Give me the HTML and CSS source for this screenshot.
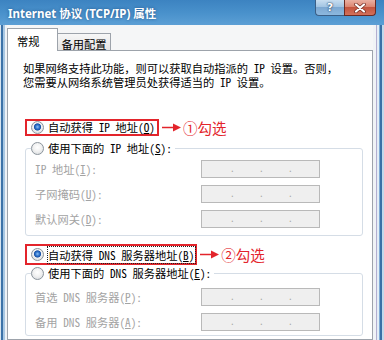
FILE: index.html
```html
<!DOCTYPE html>
<html lang="zh-CN">
<head>
<meta charset="utf-8">
<title>Internet 协议 (TCP/IP) 属性</title>
<link rel="stylesheet" href="styles.css">
</head>
<body>
<div class="window">
  <div class="titlebar">
    <span class="title">Internet 协议 (TCP/IP) 属性</span>
    <div class="caption-btns">
      <span class="btn help">?</span>
      <span class="btn close"><svg width="12" height="10" viewBox="0 0 12 10"><path d="M2 1.5 L10 8.5 M10 1.5 L2 8.5" stroke="#6e2a20" stroke-width="3.6" stroke-linecap="round"/><path d="M2 1.5 L10 8.5 M10 1.5 L2 8.5" stroke="#fff" stroke-width="2.2" stroke-linecap="round"/></svg></span>
    </div>
  </div>
  <div class="frame">
    <div class="edge-l"></div>
    <div class="dialog">
      <div class="tabs">
        <div class="tab active">常规</div>
        <div class="tab inactive">备用配置</div>
        <div class="tabs-fill"></div>
      </div>
      <div class="panel">
        <p class="intro">如果网络支持此功能，则可以获取自动指派的 IP 设置。否则，<br>您需要从网络系统管理员处获得适当的 IP 设置。</p>

        <div class="pick pick-1">
          <div class="pick-box"><span class="radio on"></span><span>自动获得 IP 地址(<u>O</u>)</span></div>
          <svg class="arrow" width="19" height="9" viewBox="0 0 19 9"><path d="M0 4.5 H12" stroke="#e3242b" stroke-width="1.5"/><path d="M11 0.5 L19 4.5 L11 8.5 Z" fill="#e3242b"/></svg>
          <span class="note">①勾选</span>
        </div>

        <fieldset class="group group-1">
          <legend class="group-title"><span class="opt"><span class="radio"></span><span>使用下面的 IP 地址(<u>S</u>):</span></span></legend>
          <div class="rows">
            <span class="label">IP 地址(<u>I</u>):</span>
            <span class="ipbox"><span>.</span><span>.</span><span>.</span></span>
            <span class="label">子网掩码(<u>U</u>):</span>
            <span class="ipbox"><span>.</span><span>.</span><span>.</span></span>
            <span class="label">默认网关(<u>D</u>):</span>
            <span class="ipbox"><span>.</span><span>.</span><span>.</span></span>
          </div>
        </fieldset>

        <div class="pick pick-2">
          <div class="pick-box"><span class="radio on"></span><span class="focus">自动获得 DNS 服务器地址(<u>B</u>)</span></div>
          <svg class="arrow" width="19" height="9" viewBox="0 0 19 9"><path d="M0 4.5 H12" stroke="#e3242b" stroke-width="1.5"/><path d="M11 0.5 L19 4.5 L11 8.5 Z" fill="#e3242b"/></svg>
          <span class="note">②勾选</span>
        </div>

        <fieldset class="group group-2">
          <legend class="group-title"><span class="opt"><span class="radio"></span><span>使用下面的 DNS 服务器地址(<u>E</u>):</span></span></legend>
          <div class="rows">
            <span class="label">首选 DNS 服务器(<u>P</u>):</span>
            <span class="ipbox"><span>.</span><span>.</span><span>.</span></span>
            <span class="label">备用 DNS 服务器(<u>A</u>):</span>
            <span class="ipbox"><span>.</span><span>.</span><span>.</span></span>
          </div>
        </fieldset>
      </div>
    </div>
    <div class="edge-r"></div>
  </div>
</div>
</body>
</html>
```

FILE: styles.css
```css
* { box-sizing: border-box; }
html, body { margin: 0; padding: 0; }
body {
  width: 384px;
  height: 340px;
  overflow: hidden;
  font-family: "Noto Sans Mono CJK SC", "Noto Sans CJK SC", sans-serif;
  font-size: 11.25px;
  color: #000;
  background: #fff;
}
.window {
  width: 384px;
  height: 340px;
  display: flex;
  flex-direction: column;
  background: #eef2f6;
}
.titlebar {
  height: 25px;
  flex: none;
  display: flex;
  align-items: flex-start;
  padding: 0 8px;
  background: linear-gradient(to bottom, #3c83c1 0%, #4a92cc 55%, #5c9fd5 100%);
}
.title {
  font-family: "Noto Sans", "Noto Sans CJK SC", sans-serif;
  font-weight: 700;
  font-size: 11.5px;
  line-height: 14px;
  margin-top: 7px;
  color: #fff;
  text-shadow: 0 0 3px rgba(20, 60, 110, .7);
  white-space: nowrap;
}
.caption-btns {
  margin-left: auto;
  display: flex;
  height: 16px;
}
.btn {
  height: 16px;
  display: flex;
  align-items: center;
  justify-content: center;
}
.help {
  width: 29px;
  border: 1px solid #3b5f86;
  border-top: 0;
  border-right: 0;
  border-radius: 0 0 0 4px;
  background: linear-gradient(to bottom, #c8def0 0%, #a3c5e3 45%, #7ea9d2 50%, #8cb8df 100%);
  color: #fff;
  font-family: "DejaVu Sans", sans-serif;
  font-weight: 700;
  font-size: 11px;
  text-shadow: 0 0 2px #1d3a5c, 0 0 1px #1d3a5c;
}
.close {
  width: 32px;
  border: 1px solid #6b2b23;
  border-top: 0;
  border-radius: 0 0 4px 0;
  background: linear-gradient(to bottom, #eab0a2 0%, #dc8672 45%, #c4553f 50%, #d2705a 100%);
}
.frame {
  flex: 1;
  display: flex;
  min-height: 0;
}
.edge-l {
  width: 7px;
  flex: none;
  background: linear-gradient(to right, #d6e4f0 0 1px, #3c72a8 1px 3px, #a8c7e2 3px 5px, #eef2f6 5px 7px);
}
.edge-r {
  width: 11px;
  flex: none;
  background: linear-gradient(to right, #f0f3f6 0 3px, #b3aed0 3px 4px, #e3eef7 4px 6px, #7fadd6 6px 7px, #3b70a6 7px 9px, #c2d9ec 9px 11px);
}
.dialog {
  flex: 1;
  min-width: 0;
  display: flex;
  flex-direction: column;
  padding-top: 3px;
  background: #f5f6f7;
}
.tabs {
  display: flex;
  height: 23px;
  flex: none;
}
.tab {
  border: 1px solid #9da3ab;
  border-bottom: 0;
  line-height: 14px;
  white-space: nowrap;
}
.tab.active {
  width: 51px;
  background: #fff;
  padding: 5px 0 0 9px;
}
.tab.inactive {
  width: 53px;
  margin-top: 5px;
  border-left: 0;
  border-bottom: 1px solid #9da3ab;
  padding-top: 3px;
  text-align: center;
  background: linear-gradient(to bottom, #f7f7f7, #e4e4e4);
}
.tabs-fill {
  flex: 1;
  border-bottom: 1px solid #9da3ab;
}
.panel {
  flex: 1;
  min-height: 0;
  overflow: hidden;
  background: #fff;
  border: 1px solid #9da3ab;
  border-top: 0;
  display: flex;
  flex-direction: column;
  align-items: flex-start;
  padding: 0 9px 0 17px;
}
.intro {
  margin: 10px 0 0 -2px;
  line-height: 14px;
  white-space: nowrap;
}
.pick {
  display: flex;
  align-items: center;
  white-space: nowrap;
}
.pick-1 { margin-top: 30px; }
.pick-2 { margin-top: 8px; }
.pick-box {
  display: flex;
  align-items: center;
  gap: 4px;
  border: 2px solid #e3242b;
  padding: 0 2px 0 4px;
  height: 17px;
  line-height: 13px;
}
.pick-2 .pick-box {
  height: 21px;
  padding-right: 0;
}
.focus {
  outline: 1px dotted #222;
  padding: 1px 1px 1px 0;
  line-height: 14px;
}
.arrow { margin-left: 3px; flex: none; }
.note {
  color: #e3242b;
  font-family: "Noto Sans CJK SC", sans-serif;
  font-size: 14.5px;
  line-height: 17px;
  margin-left: 2px;
}
.radio {
  width: 13px;
  height: 13px;
  flex: none;
  border-radius: 50%;
  border: 1px solid #8b949c;
  background: radial-gradient(circle at 50% 40%, #ffffff 0, #f2f2f2 45%, #d2d6da 100%);
}
.radio.on {
  background:
    radial-gradient(circle at 50% 45%, #8fc0f2 0, #2f74cc 2px, #1a52a6 3.2px, rgba(26, 82, 166, 0) 4px),
    radial-gradient(circle at 50% 40%, #ffffff 0, #f2f2f2 45%, #d2d6da 100%);
}
.group {
  align-self: stretch;
  margin: 5px 0 0 0;
  border: 1px solid #d5dde6;
  border-radius: 3px;
  padding: 0 9px 7px 9px;
  min-width: 0;
}
.group-2 {
  margin-top: 1px;
  padding-bottom: 4px;
}
.group-title {
  margin-left: -4px;
  padding: 0 3px 0 0;
  line-height: 14px;
  white-space: nowrap;
}
.opt {
  display: inline-flex;
  align-items: center;
  gap: 4px;
  vertical-align: top;
}
.rows {
  display: grid;
  grid-template-columns: 166px 119px;
  row-gap: 7px;
  align-items: center;
  margin-top: 5px;
}
.group-2 .rows { margin-top: 8px; }
.label {
  color: #a3a3a3;
  line-height: 14px;
  white-space: nowrap;
}
.ipbox {
  height: 18px;
  border: 1px solid #b9b9b9;
  background: #efefef;
  display: flex;
  padding-left: 3px;
  color: #a8a8a8;
  font-family: "DejaVu Sans", sans-serif;
  font-size: 10px;
  line-height: 16px;
}
.ipbox span {
  width: 29px;
  text-align: right;
}
```
